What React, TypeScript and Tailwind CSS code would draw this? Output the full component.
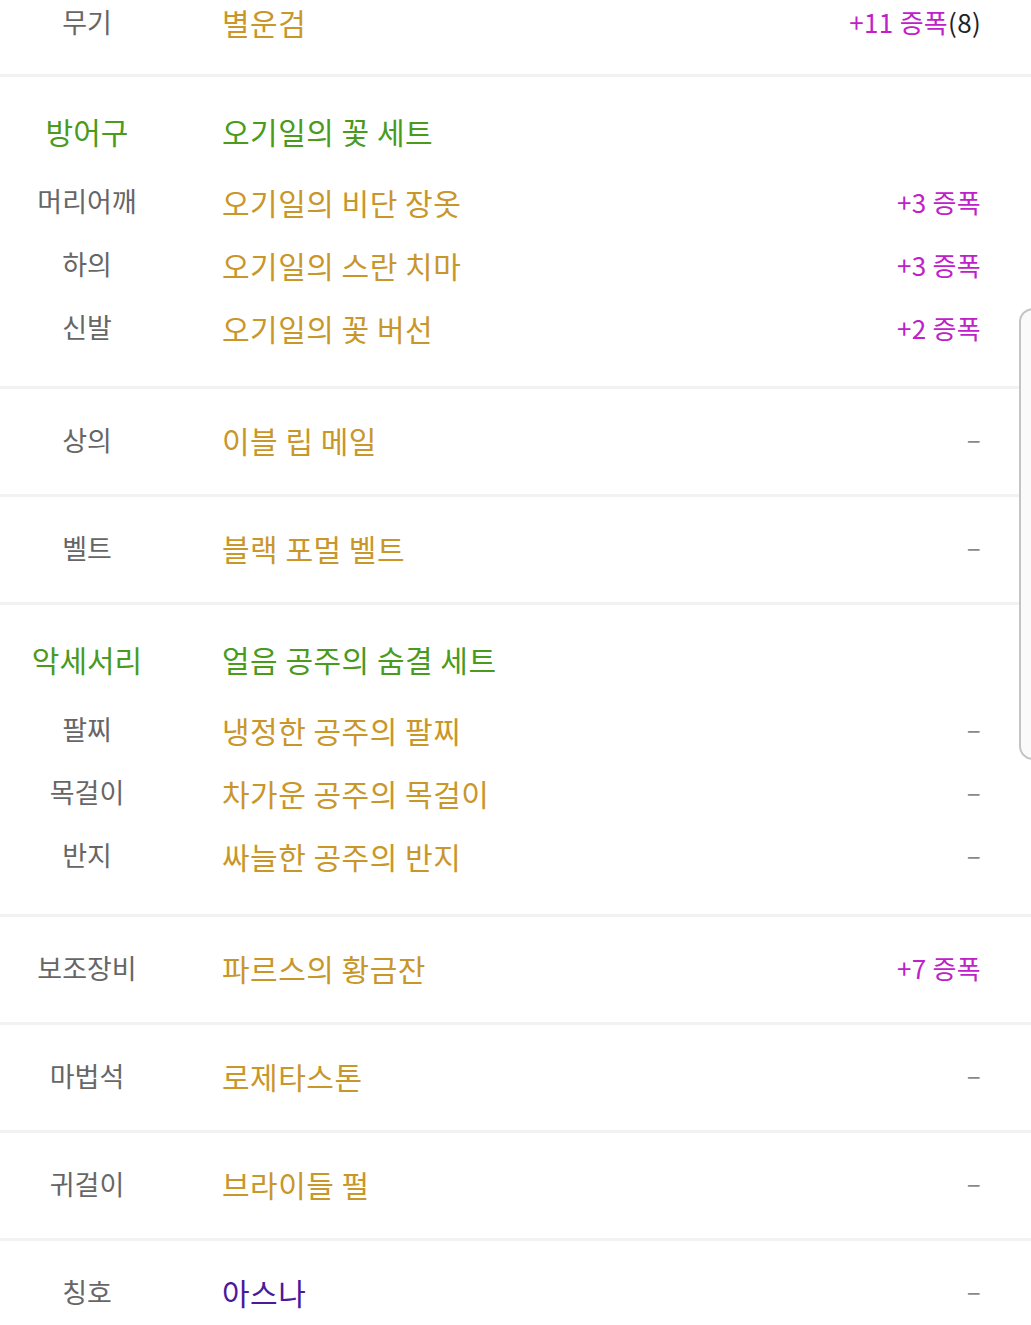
import React from "react";

type Item = {
  label: string;
  name: string;
  nameColor?: string;
  amp?: string;
  extra?: string;
};

type Section =
  | { kind: "single"; item: Item }
  | { kind: "group"; title: string; setName: string; items: Item[] };

const sections: Section[] = [
  { kind: "single", item: { label: "무기", name: "별운검", amp: "+11 증폭", extra: "(8)" } },
  {
    kind: "group",
    title: "방어구",
    setName: "오기일의 꽃 세트",
    items: [
      { label: "머리어깨", name: "오기일의 비단 장옷", amp: "+3 증폭" },
      { label: "하의", name: "오기일의 스란 치마", amp: "+3 증폭" },
      { label: "신발", name: "오기일의 꽃 버선", amp: "+2 증폭" },
    ],
  },
  { kind: "single", item: { label: "상의", name: "이블 립 메일" } },
  { kind: "single", item: { label: "벨트", name: "블랙 포멀 벨트" } },
  {
    kind: "group",
    title: "악세서리",
    setName: "얼음 공주의 숨결 세트",
    items: [
      { label: "팔찌", name: "냉정한 공주의 팔찌" },
      { label: "목걸이", name: "차가운 공주의 목걸이" },
      { label: "반지", name: "싸늘한 공주의 반지" },
    ],
  },
  { kind: "single", item: { label: "보조장비", name: "파르스의 황금잔", amp: "+7 증폭" } },
  { kind: "single", item: { label: "마법석", name: "로제타스톤" } },
  { kind: "single", item: { label: "귀걸이", name: "브라이들 펄" } },
  { kind: "single", item: { label: "칭호", name: "아스나", nameColor: "text-[#4b1a9c]" } },
];

function Row({ item, className }: { item: Item; className: string }) {
  return (
    <div className={`flex items-center leading-[1.2] ${className}`}>
      <div className="w-[174px] shrink-0 text-center text-[27px] text-[#666666]">{item.label}</div>
      <div className={`ml-[48px] flex-1 text-[30px] tracking-[0.5px] ${item.nameColor ?? "text-[#c9962a]"}`}>
        {item.name}
      </div>
      <div className="pr-[50px] text-[26px] tracking-[0.3px]">
        {item.amp ? (
          <span className="text-[#c020c8]">
            {item.amp}
            {item.extra && <span className="text-[#222222]">{item.extra}</span>}
          </span>
        ) : (
          <span className="relative -top-[2px] text-[#888888]">–</span>
        )}
      </div>
    </div>
  );
}

export default function App() {
  return (
    <div
      className="relative h-[1325px] w-[1031px] overflow-hidden bg-white"
      style={{ fontFamily: '"Noto Sans CJK KR", "Noto Sans", sans-serif' }}
    >
      {sections.map((s, i) => (
        <div key={i} className={i > 0 ? "border-t-[3px] border-[#f2f2f2]" : ""}>
          {s.kind === "single" ? (
            <Row item={s.item} className={i === 0 ? "h-[74px] pb-[30px]" : "h-[105px] pb-[3px]"} />
          ) : (
            <div className="pt-[22px] pb-[27px]">
              <div className="flex h-[63px] items-center leading-[1.2]">
                <div className="w-[174px] shrink-0 text-center text-[30px] text-[#4a9a1c]">{s.title}</div>
                <div className="ml-[48px] text-[30px] tracking-[0.5px] text-[#4a9a1c]">{s.setName}</div>
              </div>
              <div className="mt-[8px]">
                {s.items.map((it) => (
                  <Row key={it.label} item={it} className="h-[63px]" />
                ))}
              </div>
            </div>
          )}
        </div>
      ))}

      {/* fast scroll handle */}
      <div className="absolute left-[1019px] top-[308px] h-[452px] w-[30px] rounded-l-[14px] border-2 border-[#c4c4c4] bg-[#fafafa]" />
    </div>
  );
}
